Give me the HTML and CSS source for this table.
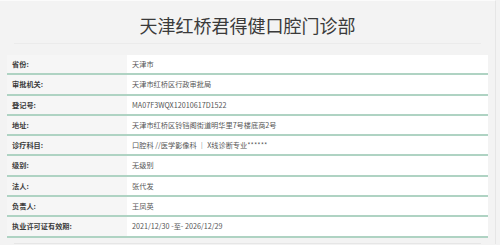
FILE: index.html
```html
<!DOCTYPE html>
<html lang="zh-CN">
<head>
<meta charset="utf-8">
<link rel="stylesheet" href="styles.css">
</head>
<body>
<div class="page">
  <h1 class="title">天津红桥君得健口腔门诊部</h1>
  <div class="table">
    <div class="row"><div class="label">省份:</div><div class="value">天津市</div></div>
    <div class="row"><div class="label">审批机关:</div><div class="value">天津市红桥区行政审批局</div></div>
    <div class="row"><div class="label">登记号:</div><div class="value">MA07F3WQX12010617D1522</div></div>
    <div class="row"><div class="label">地址:</div><div class="value">天津市红桥区铃铛阁街道明华里7号楼底商2号</div></div>
    <div class="row"><div class="label">诊疗科目:</div><div class="value">口腔科 //医学影像科 ｜ X线诊断专业******</div></div>
    <div class="row"><div class="label">级别:</div><div class="value">无级别</div></div>
    <div class="row"><div class="label">法人:</div><div class="value">张代发</div></div>
    <div class="row"><div class="label">负责人:</div><div class="value">王凤英</div></div>
    <div class="row"><div class="label">执业许可证有效期:</div><div class="value">2021/12/30 -至- 2026/12/29</div></div>
  </div>
  <div class="footer"></div>
</div>
</body>
</html>
```
FILE: styles.css
```css
html, body {
  margin: 0;
  padding: 0;
}
body {
  background: #f3f3f3;
  font-family: "Noto Sans CJK SC", "Noto Sans", sans-serif;
  color: #333;
  width: 500px;
  height: 245px;
  overflow: hidden;
}
.page {
  width: 496px;
  height: 244px;
  border-top: 1px solid #fbfbfb;
  border-right: 1px solid #e6e6e6;
  box-sizing: border-box;
  display: flex;
  flex-direction: column;
}
.title {
  margin: 0 14px 0 14px;
  height: 43px;
  box-sizing: border-box;
  padding-top: 10px;
  font-size: 18px;
  line-height: 28px;
  font-weight: normal;
  text-align: center;
  color: #3a3a3a;
  border-bottom: 1px solid #ebebeb;
}
.table {
  margin: 11px 0 0 7px;
  width: 481px;
}
.row {
  display: grid;
  grid-template-columns: 120px 1fr;
  height: 18.3px;
  border-bottom: 2px solid #afd3c3;
}
.label {
  background: #f6f6f6;
  padding-left: 5px;
  font-size: 7.2px;
  line-height: 18.3px;
  font-weight: bold;
  color: #3a3a3a;
  white-space: nowrap;
}
.value {
  background: #ffffff;
  padding-left: 5px;
  font-size: 7.2px;
  line-height: 18.3px;
  color: #555;
  white-space: nowrap;
}
.footer {
  margin: 5px 14px 0 14px;
  border-top: 1px solid #e6e6e6;
}
```
